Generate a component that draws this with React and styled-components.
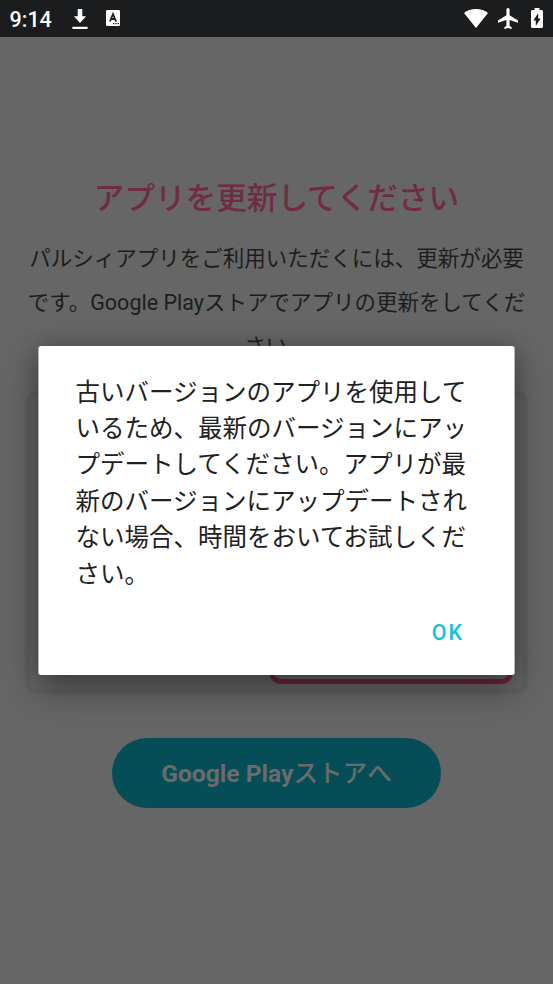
import React from 'react';
import styled, { createGlobalStyle } from 'styled-components';

const messageLines = [
    '古いバージョンのアプリを使用して',
    'いるため、最新のバージョンにアッ',
    'プデートしてください。アプリが最',
    '新のバージョンにアップデートされ',
    'ない場合、時間をおいてお試しくだ',
    'さい。',
];

const noticeLines = [
    'パルシィアプリをご利用いただくには、更新が必要',
    'です。Google Playストアでアプリの更新をしてくだ',
    'さい。',
];

function StatusBar(){
    return(
        <Bar>
            <Clock>9:14</Clock>
            <DownloadIcon viewBox="0 0 16 20">
                <path d="M5.7 0h4.6v7.2h3.8L8 14 1.9 7.2h3.8zM.4 17.8h15.2V20H.4z"/>
            </DownloadIcon>
            <KeyboardIcon viewBox="0 0 14 16">
                <rect width="14" height="16" rx="1.3"/>
                <path d="M3.9 11.5 7 4l3.1 7.5M5 9h4" fill="none" stroke="#1b1c1e" strokeWidth="1.8"/>
                <path d="M7 13h1.3v1.3H7zM9.3 13h1.3v1.3H9.3zM11.6 13h1.3v1.3h-1.3z" fill="#1b1c1e"/>
            </KeyboardIcon>
            <Spacer/>
            <WifiIcon viewBox="0 0 24 19">
                <path d="M12 19 0 4C3.200 1.400 7.400 0 12 0s8.800 1.400 12 4z"/>
            </WifiIcon>
            <PlaneIcon viewBox="2 2 19 20">
                <path d="M21 16v-2l-8-5V3.500a1.500 1.500 0 0 0-3 0V9l-8 5v2l8-2.500V19l-2 1.500V22l3.500-1 3.500 1v-1.500L13 19v-5.500z"/>
            </PlaneIcon>
            <BatteryIcon viewBox="7 2 10 20" preserveAspectRatio="none">
                <path d="M15.670 4H14V2h-4v2H8.330C7.600 4 7 4.600 7 5.330v15.330C7 21.400 7.600 22 8.330 22h7.330c.74 0 1.340-.6 1.340-1.330V5.330C17 4.600 16.400 4 15.670 4zM11 20v-5.500H9L13 7v5.500h2z"/>
            </BatteryIcon>
        </Bar>
    )
}

function App(){
    return(
        <Screen>
            <GlobalStyle/>
            <StatusBar/>
            <Page>
                <Title>アプリを更新してください</Title>
                <Notice>
                    {noticeLines.map((line) => <NoticeLine key={line}>{line}</NoticeLine>)}
                </Notice>
                <Preview>
                    <UpdateFrame/>
                </Preview>
                <StoreButton>Google Play<Kana>ストアへ</Kana></StoreButton>
            </Page>
            <Dialog role="alertdialog">
                <Message>
                    {messageLines.map((line) => <MessageLine key={line}>{line}</MessageLine>)}
                </Message>
                <OkButton>OK</OkButton>
            </Dialog>
        </Screen>
    )
}

const GlobalStyle = createGlobalStyle`
    * {
        box-sizing: border-box;
    }
    body {
        margin: 0;
        background: #666666;
        font-family: Roboto, "Noto Sans CJK JP", sans-serif;
    }
`;
const Screen = styled.div`
    position: relative;
    width: 553px;
    height: 984px;
    overflow: hidden;
    background: #666666;
`;
const Bar = styled.div`
    display: flex;
    align-items: flex-start;
    height: 37px;
    padding: 0 9px 0 9.5px;
    background: #1b1c1e;
    color: #ffffff;
    svg {
        flex: none;
        fill: #ffffff;
    }
`;
const Clock = styled.div`
    width: 62.5px;
    font-size: 21.5px;
    font-weight: 480;
    line-height: 39px;
`;
const DownloadIcon = styled.svg`
    width: 16px;
    height: 20px;
    margin: 9px 18px 0 0;
`;
const KeyboardIcon = styled.svg`
    width: 14px;
    height: 16px;
    margin-top: 10px;
`;
const Spacer = styled.div`
    flex: 1;
`;
const WifiIcon = styled.svg`
    width: 24px;
    height: 19px;
    margin: 8.5px 10px 0 0;
`;
const PlaneIcon = styled.svg`
    width: 20px;
    height: 21px;
    margin: 8px 13px 0 0;
`;
const BatteryIcon = styled.svg`
    width: 12px;
    height: 20px;
    margin: 8px 1px 0 0;
`;
const Page = styled.div`
    display: flex;
    flex-direction: column;
    align-items: center;
    padding-top: 140px;
`;
const Title = styled.h1`
    margin: 0;
    color: #702c41;
    font-size: 30.6px;
    font-weight: 500;
    line-height: 44px;
`;
const Notice = styled.div`
    margin-top: 16px;
    color: #1b1e1d;
    font-size: 21.5px;
    line-height: 44px;
    text-align: center;
`;
const NoticeLine = styled.div`
    height: 44px;
    white-space: nowrap;
`;
const Preview = styled.div`
    display: flex;
    align-items: flex-end;
    justify-content: flex-end;
    width: 503px;
    height: 302px;
    margin-top: 23px;
    padding: 0 10px 5px 0;
    border: 5px solid #5e6261;
    border-radius: 10px;
`;
const UpdateFrame = styled.div`
    width: 244px;
    height: 60px;
    border: 5.5px solid #70243c;
    border-radius: 12px;
`;
const StoreButton = styled.button`
    width: 329px;
    height: 70px;
    margin-top: 44px;
    padding: 2px 0 0;
    border: 0;
    border-radius: 35px;
    background: #054e58;
    color: #6b6b6b;
    font-family: inherit;
    font-size: 24.6px;
    font-weight: 700;
    line-height: 68px;
`;
const Kana = styled.span`
    font-weight: 500;
`;
const Dialog = styled.div`
    position: absolute;
    top: 346px;
    left: 38px;
    display: flex;
    flex-direction: column;
    align-items: flex-end;
    width: 477px;
    height: 329px;
    padding: 28.6px 36px 0 37px;
    border: solid #b5b5b5;
    border-width: 0 1px;
    border-radius: 3px;
    background: #ffffff;
    box-shadow: 0 14px 36px rgba(0, 0, 0, 0.38), 0 0 20px rgba(0, 0, 0, 0.18);
`;
const Message = styled.div`
    width: 100%;
    color: #212121;
    font-size: 24.5px;
    line-height: 36.4px;
`;
const MessageLine = styled.div`
    height: 36.4px;
    margin-left: -0.5px;
    white-space: nowrap;
`;
const OkButton = styled.button`
    margin-top: 16.4px;
    padding: 0 14px;
    border: 0;
    background: transparent;
    color: #15c1dc;
    font-family: inherit;
    font-size: 21.5px;
    font-weight: 500;
    letter-spacing: 1.9px;
    line-height: 48px;
`;
export default App
